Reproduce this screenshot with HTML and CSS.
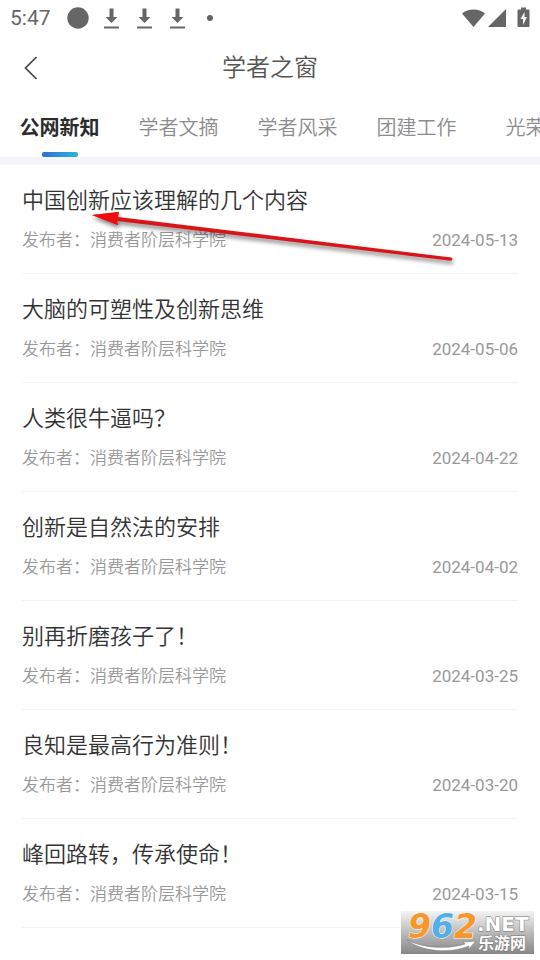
FILE: index.html
```html
<!DOCTYPE html>
<html lang="zh-CN">
<head>
<meta charset="utf-8">
<meta name="viewport" content="width=device-width, initial-scale=1">
<title>学者之窗</title>
<link rel="stylesheet" href="styles.css">
</head>
<body>
<div class="status">
  <span class="clock">5:47</span>
  <svg class="notices" width="148" height="24" viewBox="0 0 148 24" fill="#666" aria-hidden="true">
    <circle cx="11" cy="12" r="10.7"/>
    <g id="dl"><path d="M42.500 2.500h4v8.500h4l-6 6-6-6h4z"/><path d="M37 20.500h15v2H37z"/></g>
    <use href="#dl" x="33"/>
    <use href="#dl" x="66"/>
    <circle cx="143" cy="12" r="3"/>
  </svg>
  <svg class="system" width="70" height="24" viewBox="0 0 70 24" fill="#666" aria-hidden="true">
    <path d="M0 7.500C6 2 17 2 23 7.500L11.500 21z"/>
    <path d="M44 3v18H26z"/>
    <path d="M59 1.500h5v2h2.500q1 0 1 1V20q0 1-1 1h-10q-1 0-1-1V4.500q0-1 1-1H59z"/>
    <path d="M62.500 6l-4 7h2.500v6l4-8h-2.500z" fill="#fff"/>
  </svg>
</div>
<header class="header">
  <button class="back" type="button" aria-label="返回">
    <svg width="14" height="24" viewBox="0 0 14 24" fill="none" stroke="#444" stroke-width="1.700"><path d="M12.500 1L1.500 12l11 11"/></svg>
  </button>
  <h1>学者之窗</h1>
</header>
<nav class="tabs">
  <a class="tab active" href="#news">公网新知</a>
  <a class="tab" href="#digest">学者文摘</a>
  <a class="tab" href="#people">学者风采</a>
  <a class="tab" href="#team">团建工作</a>
  <a class="tab" href="#honor">光荣榜</a>
</nav>
<main class="list" id="news">
  <article class="item"><h2>中国创新应该理解的几个内容</h2><div class="meta"><span>发布者：消费者阶层科学院</span><time>2024-05-13</time></div></article>
  <article class="item"><h2>大脑的可塑性及创新思维</h2><div class="meta"><span>发布者：消费者阶层科学院</span><time>2024-05-06</time></div></article>
  <article class="item"><h2>人类很牛逼吗？</h2><div class="meta"><span>发布者：消费者阶层科学院</span><time>2024-04-22</time></div></article>
  <article class="item"><h2>创新是自然法的安排</h2><div class="meta"><span>发布者：消费者阶层科学院</span><time>2024-04-02</time></div></article>
  <article class="item"><h2>别再折磨孩子了！</h2><div class="meta"><span>发布者：消费者阶层科学院</span><time>2024-03-25</time></div></article>
  <article class="item"><h2>良知是最高行为准则！</h2><div class="meta"><span>发布者：消费者阶层科学院</span><time>2024-03-20</time></div></article>
  <article class="item"><h2>峰回路转，传承使命！</h2><div class="meta"><span>发布者：消费者阶层科学院</span><time>2024-03-15</time></div></article>
  <svg class="arrow" width="380" height="70" viewBox="0 0 380 70" aria-hidden="true">
    <path d="M2 9L29 6l-1 5 333 40.500a1.600 1.600 0 0 1-.4 3.200L27 15l1 4z" fill="#d9151a"/>
    <path d="M2 9L29 6l-2 5-1 3 2 5z" fill="#f00c0c"/>
  </svg>
</main>
<div class="mark">
  <svg width="133" height="43" viewBox="0 0 133 43" aria-hidden="true">
    <path d="M6 29C20 41 50 43 68 35l-1 4 8-9-13 1 2 2C48 38 24 38 6 29z" fill="#fff" stroke="#777" stroke-width=".6"/>
    <text class="digits" x="7" y="27"><tspan class="orange">9</tspan><tspan class="blue">6</tspan><tspan class="orange">2</tspan></text>
    <text class="net" x="76" y="20">.NET</text>
    <text class="site" x="77" y="38">乐游网</text>
  </svg>
</div>
</body>
</html>
```
FILE: styles.css
```css
* { box-sizing: border-box; }
body {
  position: relative;
  margin: 0;
  min-height: 100vh;
  overflow-x: hidden;
  background: #fff;
  color: #333;
  font-family: Roboto, "Noto Sans CJK SC", sans-serif;
}
h1, h2 { margin: 0; font-weight: 350; }
a { color: inherit; text-decoration: none; }

.status {
  display: flex;
  align-items: center;
  height: 36px;
  padding: 0 8px 0 10px;
  color: #666;
}
.clock { width: 57px; font-size: 21px; }
.system { margin-left: auto; }

.header {
  display: grid;
  grid-template-columns: 48px 1fr 48px;
  align-items: center;
  height: 64px;
}
.header h1 { text-align: center; font-size: 24px; line-height: 32px; color: #555; }
.back { display: flex; padding: 0 0 0 24px; border: 0; background: none; }

.tabs {
  display: flex;
  height: 65px;
  overflow: hidden;
  border-bottom: 8px solid #f4f4fa;
}
.tab {
  display: flex;
  flex: 0 0 119px;
  flex-direction: column;
  align-items: center;
  justify-content: space-between;
  padding-top: 12px;
  font-size: 20px;
  line-height: 32px;
  font-weight: 350;
  color: #8c8c8c;
}
.active { color: #2c2c2c; font-weight: 700; }
.active::after {
  content: "";
  width: 36px;
  height: 5px;
  border-radius: 2px;
  background: linear-gradient(90deg, #2d6fd2, #2db4d8);
}

.list { position: relative; padding: 0 22px; }
.item { padding: 20px 0 21px; border-bottom: 1px solid #f3f3f3; }
.item h2 { font-size: 22px; line-height: 32px; color: #333; }
.meta {
  display: flex;
  justify-content: space-between;
  padding-top: 11px;
  font-size: 17px;
  line-height: 24px;
  color: #999;
}
.meta span { font-weight: 350; }

.arrow {
  position: absolute;
  left: 90px;
  top: 41px;
  filter: drop-shadow(1px 3px 2px rgba(0, 0, 0, .5));
}

.mark {
  position: absolute;
  right: 6px;
  top: 911px;
  height: 43px;
  background: linear-gradient(#f4f4f4, #bbb 50%, #888);
}
.mark svg { display: block; }
.digits {
  font: italic 700 33px "DejaVu Sans", sans-serif;
  stroke: #fff;
  stroke-width: 1px;
  paint-order: stroke;
}
.orange { fill: #f7962a; }
.blue { fill: #55aee6; }
.net, .site {
  fill: #fff;
  stroke: #777;
  stroke-width: 1px;
  paint-order: stroke;
}
.net { font: 700 20px "DejaVu Sans", sans-serif; }
.site { font: 700 16px "Noto Sans CJK SC", sans-serif; }
```
